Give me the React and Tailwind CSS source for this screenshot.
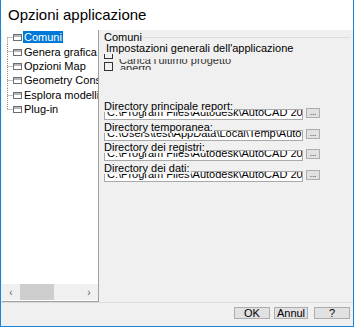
import React from 'react';

const treeItems = ['Comuni', 'Genera grafica', 'Opzioni Map', 'Geometry Cons', 'Esplora modelli', 'Plug-in'];

const dirs = [
  { label: 'Directory principale report:', value: 'C:\\Program Files\\Autodesk\\AutoCAD 2019' },
  { label: 'Directory temporanea:', value: 'C:\\Users\\test\\AppData\\Local\\Temp\\AutoCAD' },
  { label: 'Directory dei registri:', value: 'C:\\Program Files\\Autodesk\\AutoCAD 2019' },
  { label: 'Directory dei dati:', value: 'C:\\Program Files\\Autodesk\\AutoCAD 2019' },
];

function TreeLines({ first, last }) {
  return (
    <svg width="11" height="14.4" className="shrink-0">
      <line x1="5.5" y1={first ? 7.5 : 0} x2="5.5" y2={last ? 7.5 : 14.4} stroke="#8a8a8a" strokeDasharray="1 1" />
      <line x1="5.5" y1="7.5" x2="11" y2="7.5" stroke="#8a8a8a" strokeDasharray="1 1" />
    </svg>
  );
}

function NodeIcon() {
  return (
    <svg width="9" height="8" className="shrink-0">
      <rect x="0.5" y="1.5" width="8" height="6" fill="#fff" stroke="#6e6e6e" />
      <line x1="0.5" y1="3" x2="8.5" y2="3" stroke="#6e6e6e" />
    </svg>
  );
}

function DirRow({ label, value }) {
  return (
    <div className="h-[20.6px]">
      <div className="relative z-10 -mb-[3px] h-[11px] leading-[11px]">
        <span className="bg-[#f0f0f0] pr-[1px]">{label}</span>
      </div>
      <div className="flex items-start">
        <div className="h-[11px] w-[199px] overflow-hidden border border-[#a9a9a9] bg-white pl-[2px]">
          <div className="-mt-[3px] whitespace-nowrap leading-[11px]">{value}</div>
        </div>
        <div className="ml-[3px] -mt-[1px] flex h-[10px] w-[14px] items-end justify-center border border-[#adadad] bg-[#e1e1e1] text-[8px] leading-[8px]">
          ...
        </div>
      </div>
    </div>
  );
}

export default function App() {
  return (
    <div className="flex h-[327px] w-[354px] flex-col border-x border-b border-[#1883d7] bg-white font-['Liberation_Sans',Arial,sans-serif] text-[11px] text-black">
      <div className="flex h-[30px] shrink-0 items-center pl-[7px] text-[15px]">Opzioni applicazione</div>

      <div className="flex flex-1 flex-col bg-[#f0f0f0]">
        <div className="flex h-[272px]">
          <div className="ml-[1px] flex w-[97px] flex-col border-r border-b border-[#a0a0a0] bg-white">
            <div className="flex-1">
              {treeItems.map((t, i) => (
                <div key={t} className="flex h-[14.4px] items-center overflow-hidden whitespace-nowrap">
                  <TreeLines first={i === 0} last={i === treeItems.length - 1} />
                  <NodeIcon />
                  <span
                    className={`ml-[1px] px-[1px] leading-[12px] ${i === 0 ? 'bg-[#0078d7] text-white' : ''}`}
                  >
                    {t}
                  </span>
                </div>
              ))}
            </div>
            <div className="flex h-[16px] items-center bg-[#f0f0f0] text-[10px] text-[#606060]">
              <span className="w-[18px] text-center">‹</span>
              <div className="h-full w-[34px] bg-[#cdcdcd]" />
              <div className="flex-1" />
              <span className="w-[18px] text-center">›</span>
            </div>
            <div className="h-[1px]" />
          </div>

          <div className="flex flex-1 flex-col pt-[1px] pl-[5px] pr-[3px]">
            <div className="flex items-center">
              <span className="leading-[12px]">Comuni</span>
              <div className="ml-[1px] h-px flex-1 bg-[#dcdcdc]" />
            </div>
            <div className="pl-[2px] leading-[11px]">Impostazioni generali dell'applicazione</div>

            <div className="flex h-[19px] text-[#333]">
              <div className="flex w-[9px] flex-col">
                <div className="h-[5px] w-[9px] border-x border-b border-[#333]" />
                <div className="mt-[3px] h-[9px] w-[9px] border border-[#333]" />
              </div>
              <div className="ml-[6px] flex flex-col">
                <div className="h-[5px] overflow-hidden">
                  <div className="-mt-[8px] pl-[39px] leading-[11px]">ˇ</div>
                </div>
                <div className="h-[7px] overflow-hidden">
                  <div className="-mt-[4px] whitespace-nowrap leading-[11px]">Carica l'ultimo progetto</div>
                </div>
                <div className="h-[4px] overflow-hidden pl-[1px]">
                  <div className="-mt-[3px] leading-[11px]">aperto</div>
                </div>
              </div>
            </div>

            <div className="mt-[28px]">
              {dirs.map((d) => (
                <DirRow key={d.label} {...d} />
              ))}
            </div>
          </div>
        </div>

        <div className="h-px bg-[#dcdcdc]" />

        <div className="flex justify-end gap-[4px] pt-[4px] pr-[3px]">
          <div className="flex h-[12px] w-[36px] items-center justify-center border border-[#adadad] bg-[#e1e1e1] leading-[10px]">OK</div>
          <div className="flex h-[12px] w-[34px] items-center justify-center border border-[#adadad] bg-[#e1e1e1] leading-[10px]">Annul</div>
          <div className="ml-[2px] flex h-[12px] w-[36px] items-center justify-center border border-[#adadad] bg-[#e1e1e1] leading-[10px]">?</div>
        </div>
      </div>
    </div>
  );
}
